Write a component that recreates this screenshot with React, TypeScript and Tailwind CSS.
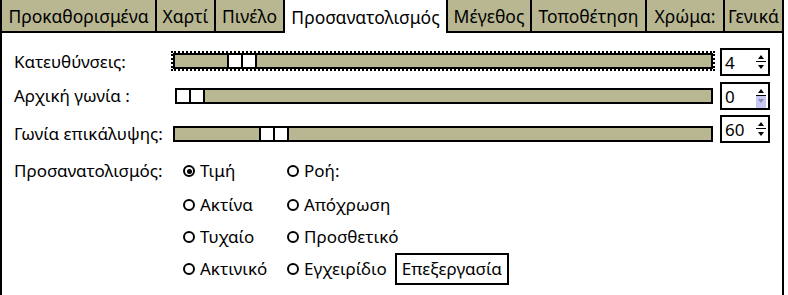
import React from "react"

const khaki = "bg-[#b8b792]"

type TabDef = { label: string; w: string; active?: boolean; first?: boolean; afterActive?: boolean }

const tabs: TabDef[] = [
  { label: "Προκαθορισμένα", w: "w-[157px]", first: true },
  { label: "Χαρτί", w: "w-[59px]" },
  { label: "Πινέλο", w: "w-[69px]" },
  { label: "Προσανατολισμός", w: "w-[161px]", active: true },
  { label: "Μέγεθος", w: "w-[86px]", afterActive: true },
  { label: "Τοποθέτηση", w: "w-[115px]" },
  { label: "Χρώμα:", w: "w-[78px]" },
  { label: "Γενικά", w: "w-[59px]" },
]

function Tab({ tab }: { tab: TabDef }) {
  if (tab.active) {
    return (
      <div className={`${tab.w} h-[33px] flex items-center justify-center bg-white pt-[2px] whitespace-nowrap`}>
        {tab.label}
      </div>
    )
  }
  return (
    <div
      className={`${tab.w} h-[33px] flex items-center justify-center ${khaki} border-black border-r-2 border-b-2 pt-[2px] whitespace-nowrap ${
        tab.first || tab.afterActive ? "border-l-2" : ""
      }`}
    >
      {tab.label}
    </div>
  )
}

function Slider({ handleLeft, focused }: { handleLeft: string; focused?: boolean }) {
  return (
    <div
      className={`relative w-[540px] h-4 border-2 border-black ${khaki} ${
        focused ? "outline-2 outline-dotted outline-black" : ""
      }`}
    >
      <div className={`absolute top-[-2px] ${handleLeft} h-4 w-[30px] border-2 border-black bg-white flex`}>
        <div className="flex-1" />
        <div className="w-[2px] bg-black" />
        <div className="flex-1" />
      </div>
    </div>
  )
}

function SpinBox({ value, hoverDown }: { value: string; hoverDown?: boolean }) {
  return (
    <div className="w-[50px] h-[28px] border-2 border-black bg-white flex items-center justify-between pl-[3px] pr-[2px]">
      <span className="leading-none">{value}</span>
      <div className="w-[10px] h-full flex flex-col">
        <div className="flex-1 flex items-end justify-center pb-[2px]">
          <svg width="6" height="4" viewBox="0 0 6 4">
            <path d="M3 0 L6 4 L0 4 Z" fill="#000" />
          </svg>
        </div>
        <div className="h-[1px] bg-black" />
        <div className={`flex-1 flex items-start justify-center pt-[3px] ${hoverDown ? "bg-[#c9c8f2]" : ""}`}>
          <svg width="6" height="4" viewBox="0 0 6 4">
            <path d="M0 0 L6 0 L3 4 Z" fill={hoverDown ? "#8d8db0" : "#000"} />
          </svg>
        </div>
      </div>
    </div>
  )
}

function Radio({ label, checked }: { label: string; checked?: boolean }) {
  return (
    <div className="flex items-center gap-[5px] whitespace-nowrap">
      <div className="w-3 h-3 rounded-full border-2 border-black bg-white flex items-center justify-center">
        {checked && <div className="w-[5px] h-[5px] rounded-full bg-black" />}
      </div>
      <span>{label}</span>
    </div>
  )
}

export default function App() {
  return (
    <div
      className="w-[788px] h-[295px] bg-white text-black overflow-hidden text-[17px]"
      style={{ fontFamily: '"Noto Sans", "DejaVu Sans", sans-serif' }}
    >
      <div className="flex text-[17.5px]">
        {tabs.map((t) => (
          <Tab key={t.label} tab={t} />
        ))}
      </div>

      <div className="w-[784px] h-[262px] border-l-2 border-r-2 border-black pl-3 pr-3 pt-[15px]">
        {/* Sliders */}
        <div className="flex flex-col gap-[6px]">
          <div className="flex items-center h-[28px]">
            <div className="w-[161px] whitespace-nowrap">Κατευθύνσεις:</div>
            <div className="mt-[-2px]">
              <Slider handleLeft="left-[52px]" focused />
            </div>
            <div className="ml-[7px]">
              <SpinBox value="4" />
            </div>
          </div>
          <div className="flex items-center h-[28px]">
            <div className="w-[161px] whitespace-nowrap">Αρχική γωνία :</div>
            <Slider handleLeft="left-[-2px]" />
            <div className="ml-[7px]">
              <SpinBox value="0" hoverDown />
            </div>
          </div>
          <div className="flex items-center h-[28px] mt-[-1px]">
            <div className="w-[161px] mt-[10px] whitespace-nowrap">Γωνία επικάλυψης:</div>
            <div className="mt-[10px]">
              <Slider handleLeft="left-[84px]" />
            </div>
            <div className="ml-[7px]">
              <SpinBox value="60" />
            </div>
          </div>
        </div>

        {/* Orientation radios */}
        <div className="flex mt-[12px]">
          <div className="w-[169px] h-[32px] flex items-center whitespace-nowrap">Προσανατολισμός:</div>
          <div className="flex flex-col">
            <div className="flex h-[32px] items-center">
              <div className="w-[104px]"><Radio label="Τιμή" checked /></div>
              <Radio label="Ροή:" />
            </div>
            <div className="flex h-[32px] items-center mt-[2px]">
              <div className="w-[104px]"><Radio label="Ακτίνα" /></div>
              <Radio label="Απόχρωση" />
            </div>
            <div className="flex h-[32px] items-center">
              <div className="w-[104px]"><Radio label="Τυχαίο" /></div>
              <Radio label="Προσθετικό" />
            </div>
            <div className="flex h-[32px] items-center">
              <div className="w-[104px]"><Radio label="Ακτινικό" /></div>
              <Radio label="Εγχειρίδιο" />
              <button className="ml-[8px] h-[32px] px-[5px] border-2 border-black bg-white whitespace-nowrap">
                Επεξεργασία
              </button>
            </div>
          </div>
        </div>
      </div>
    </div>
  )
}
